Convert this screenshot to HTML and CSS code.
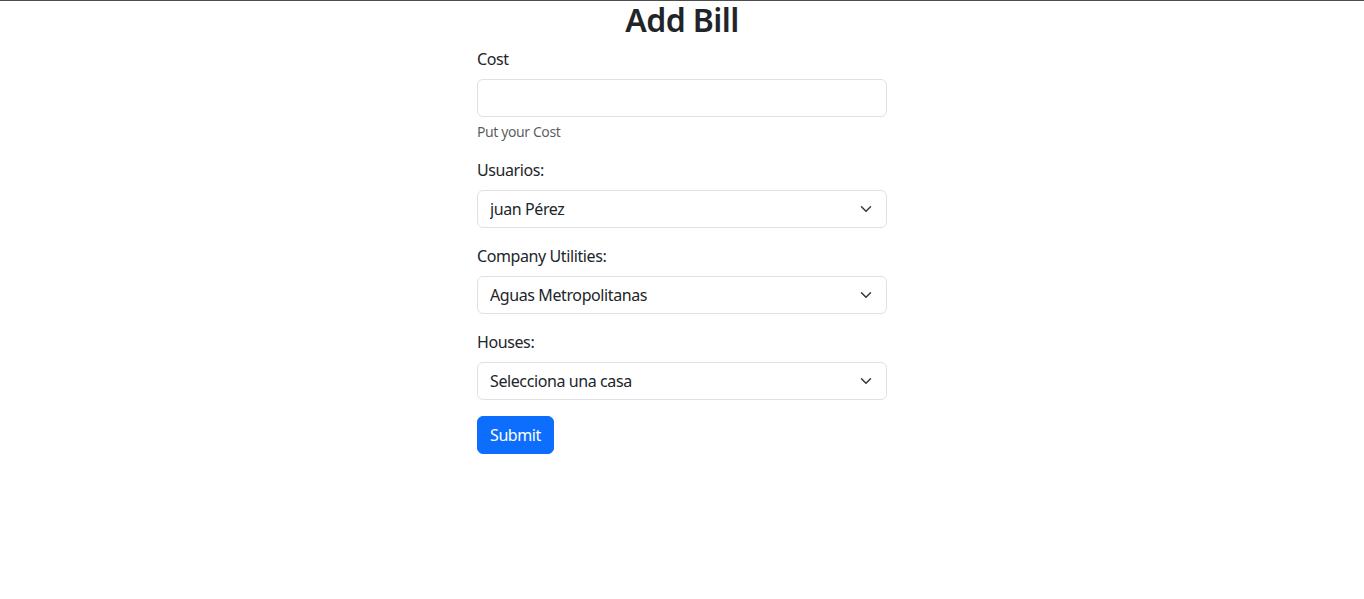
FILE: index.html
```html
<!DOCTYPE html>
<html lang="es">
<head>
<meta charset="utf-8">
<title>Add Bill</title>
<link rel="stylesheet" href="styles.css">
</head>
<body>
<div class="page">
  <div class="container">
    <h2 class="title">Add Bill</h2>
    <form class="form">
      <div class="field">
        <label class="label" for="cost">Cost</label>
        <input class="control" id="cost" type="text">
        <div class="help">Put your Cost</div>
      </div>
      <div class="field">
        <label class="label" for="users">Usuarios:</label>
        <div class="select-wrap">
          <select class="control select" id="users">
            <option>juan Pérez</option>
          </select>
          <svg class="chevron" viewBox="0 0 16 16" width="16" height="12" preserveAspectRatio="xMidYMid meet" aria-hidden="true"><path fill="none" stroke="#343a40" stroke-linecap="round" stroke-linejoin="round" stroke-width="2" d="m2 5 6 6 6-6"/></svg>
        </div>
      </div>
      <div class="field">
        <label class="label" for="company">Company Utilities:</label>
        <div class="select-wrap">
          <select class="control select" id="company">
            <option>Aguas Metropolitanas</option>
          </select>
          <svg class="chevron" viewBox="0 0 16 16" width="16" height="12" preserveAspectRatio="xMidYMid meet" aria-hidden="true"><path fill="none" stroke="#343a40" stroke-linecap="round" stroke-linejoin="round" stroke-width="2" d="m2 5 6 6 6-6"/></svg>
        </div>
      </div>
      <div class="field">
        <label class="label" for="houses">Houses:</label>
        <div class="select-wrap">
          <select class="control select" id="houses">
            <option>Selecciona una casa</option>
          </select>
          <svg class="chevron" viewBox="0 0 16 16" width="16" height="12" preserveAspectRatio="xMidYMid meet" aria-hidden="true"><path fill="none" stroke="#343a40" stroke-linecap="round" stroke-linejoin="round" stroke-width="2" d="m2 5 6 6 6-6"/></svg>
        </div>
      </div>
      <button class="btn" type="button">Submit</button>
    </form>
  </div>
</div>
</body>
</html>
```
FILE: styles.css
```css
* { box-sizing: border-box; }
html, body { margin: 0; padding: 0; }
body {
  font-family: "Noto Sans", "Open Sans", "Liberation Sans", sans-serif;
  font-size: 16px;
  line-height: 1.5;
  letter-spacing: -0.4px;
  color: #212529;
  background: #fff;
}
.page {
  border-top: 1px solid #4d4d4d;
  min-height: 599px;
}
.container {
  width: 410px;
  margin: 0 auto;
}
.title {
  margin: 0 0 8px;
  font-size: 32px;
  font-weight: 600;
  line-height: 1.2;
  letter-spacing: -0.6px;
  text-align: center;
}
.form { display: flex; flex-direction: column; align-items: flex-start; }
.field { width: 100%; margin-bottom: 16px; }
.label {
  display: block;
  margin-bottom: 8px;
}
.control {
  display: block;
  width: 100%;
  height: 38px;
  padding: 6px 12px;
  font: inherit;
  letter-spacing: inherit;
  color: #212529;
  background: #fff;
  border: 1px solid #dee2e6;
  border-radius: 6px;
  outline: none;
  appearance: none;
  -webkit-appearance: none;
}
.select { padding-right: 36px; }
.select-wrap { position: relative; }
.chevron {
  position: absolute;
  right: 13px;
  top: 13px;
  pointer-events: none;
}
.help {
  margin-top: 4px;
  font-size: 14px;
  line-height: 1.5;
  color: rgba(33, 37, 41, 0.75);
}
.btn {
  height: 38px;
  padding: 6px 12px;
  font: inherit;
  letter-spacing: inherit;
  color: #fff;
  background: #0d6efd;
  border: 1px solid #0d6efd;
  border-radius: 6px;
}
```
